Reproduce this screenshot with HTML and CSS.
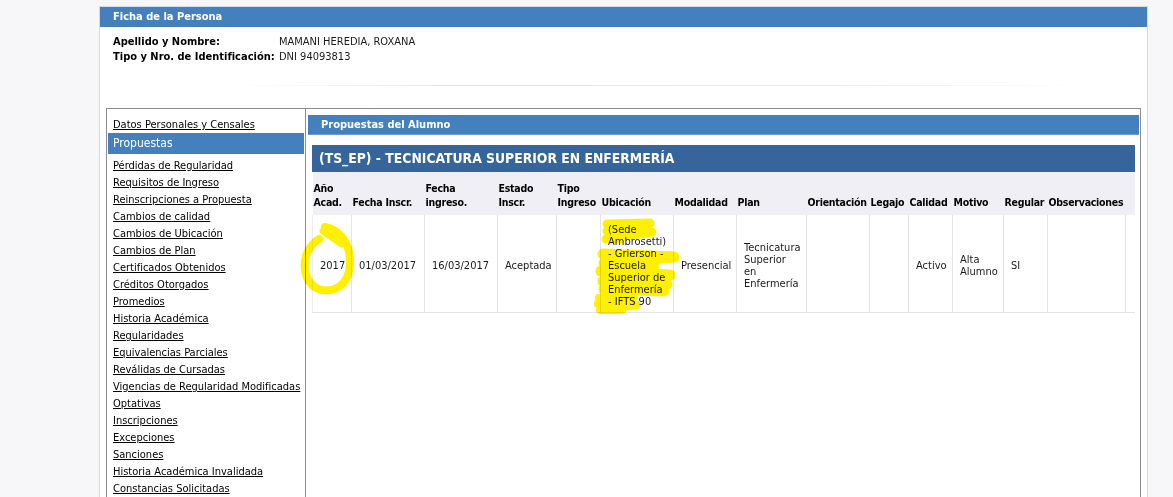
FILE: index.html
```html
<!DOCTYPE html>
<html lang="es">
<head>
<meta charset="utf-8">
<title>Ficha de la Persona</title>
<link rel="stylesheet" href="styles.css">
</head>
<body>
<div class="page">
  <div class="ficha">
    <div class="bar">Ficha de la Persona</div>
    <table class="info">
      <tr><th>Apellido y Nombre:</th><td>MAMANI HEREDIA, ROXANA</td></tr>
      <tr><th>Tipo y Nro. de Identificación:</th><td>DNI 94093813</td></tr>
    </table>
    <div class="sep"></div>
    <div class="box">
      <nav class="side">
        <a href="#">Datos Personales y Censales</a>
        <div class="active">Propuestas</div>
        <a href="#">Pérdidas de Regularidad</a>
        <a href="#">Requisitos de Ingreso</a>
        <a href="#">Reinscripciones a Propuesta</a>
        <a href="#">Cambios de calidad</a>
        <a href="#">Cambios de Ubicación</a>
        <a href="#">Cambios de Plan</a>
        <a href="#">Certificados Obtenidos</a>
        <a href="#">Créditos Otorgados</a>
        <a href="#">Promedios</a>
        <a href="#">Historia Académica</a>
        <a href="#">Regularidades</a>
        <a href="#">Equivalencias Parciales</a>
        <a href="#">Reválidas de Cursadas</a>
        <a href="#">Vigencias de Regularidad Modificadas</a>
        <a href="#">Optativas</a>
        <a href="#">Inscripciones</a>
        <a href="#">Excepciones</a>
        <a href="#">Sanciones</a>
        <a href="#">Historia Académica Invalidada</a>
        <a href="#">Constancias Solicitadas</a>
      </nav>
      <section class="content">
        <div class="subbar">Propuestas del Alumno</div>
        <div class="inner">
          <div class="title">(TS_EP) - TECNICATURA SUPERIOR EN ENFERMERÍA</div>
          <table class="grid">
            <colgroup>
              <col class="c39"><col class="c73"><col class="c73"><col class="c59"><col class="c44"><col class="c73"><col class="c63"><col class="c70"><col class="c63"><col class="c39"><col class="c44"><col class="c51"><col class="c44"><col class="c78"><col class="c9">
            </colgroup>
            <thead>
              <tr>
                <th>Año<br>Acad.</th>
                <th>Fecha Inscr.</th>
                <th>Fecha<br>ingreso.</th>
                <th>Estado<br>Inscr.</th>
                <th>Tipo<br>Ingreso</th>
                <th>Ubicación</th>
                <th>Modalidad</th>
                <th>Plan</th>
                <th>Orientación</th>
                <th>Legajo</th>
                <th>Calidad</th>
                <th>Motivo</th>
                <th>Regular</th>
                <th>Observaciones</th>
                <th></th>
              </tr>
            </thead>
            <tbody>
              <tr>
                <td>2017</td>
                <td>01/03/2017</td>
                <td>16/03/2017</td>
                <td>Aceptada</td>
                <td></td>
                <td>(Sede Ambrosetti) - Grierson - Escuela Superior de Enfermería - IFTS 90</td>
                <td>Presencial</td>
                <td>Tecnicatura Superior en Enfermería</td>
                <td></td>
                <td></td>
                <td>Activo</td>
                <td>Alta Alumno</td>
                <td>SI</td>
                <td></td>
                <td></td>
              </tr>
            </tbody>
          </table>
        </div>
      </section>
    </div>
  </div>
  <svg class="marks" width="1173" height="497" viewBox="0 0 1173 497">
    <path d="M325 227 C340 230 351 244 350 264 C349 285 335 292 322 290 C307 287 302 270 306 256 C309 247 314 242 319 239" fill="none" stroke="#fff000" stroke-width="8" stroke-linecap="round"/>
    <path d="M323 231 L342 244" fill="none" stroke="#fff000" stroke-width="7" stroke-linecap="round"/>
    <path d="M607 224 L650 223 L607 231 L652 232 L606 239 L620 239" fill="none" stroke="#fff000" stroke-width="9" stroke-linecap="round" stroke-linejoin="round"/>
    <path d="M603 254 L674 257 L604 263 L654 266 L601 271 L670 275 L603 281 L667 284 L604 289 L664 291" fill="none" stroke="#fff000" stroke-width="11" stroke-linecap="round" stroke-linejoin="round"/>
    <path d="M599 298 L634 297 L598 304 L637 305 L600 310 L622 310" fill="none" stroke="#fff000" stroke-width="8" stroke-linecap="round" stroke-linejoin="round"/>
  </svg>
</div>
</body>
</html>
```

FILE: styles.css
```css
html, body {
  margin: 0;
  padding: 0;
  background: #f7f6f9;
}

body {
  font-family: "DejaVu Sans Condensed", "DejaVu Sans", sans-serif;
  font-size: 11px;
  color: #111;
}

.page {
  position: relative;
  width: 1173px;
  height: 497px;
  overflow: hidden;
}

.ficha {
  margin: 6px 0 0 99px;
  width: 1047px;
  border: 1px solid #cfdbe8;
  border-bottom: none;
  background: #fff;
  height: 600px;
}

.bar {
  height: 20px;
  line-height: 20px;
  padding-left: 13px;
  background: #4580be;
  color: #fff;
  font-weight: bold;
  font-size: 11px;
}

.info {
  border-collapse: collapse;
  margin: 7px 0 0 13px;
}

.info th,
.info td {
  padding: 0;
  line-height: 15px;
  text-align: left;
  vertical-align: top;
  white-space: nowrap;
}

.info th {
  width: 166px;
  font-weight: bold;
  color: #000;
}

.info td {
  color: #1a1a1a;
}

.sep {
  height: 1px;
  margin: 21px 60px 22px 135px;
  background: linear-gradient(to right, rgba(230,230,230,0), #e6e6e6 25%, #eaeaea 70%, rgba(240,240,240,0));
}

.box {
  display: flex;
  margin: 0 6px;
  border: 1px solid #8c8c8c;
  height: 500px;
}

.side {
  width: 198px;
  flex: none;
  border-right: 1px solid #8c8c8c;
  padding-top: 7px;
}

.side a {
  display: block;
  padding-left: 6px;
  line-height: 17px;
  color: #000;
  text-decoration: underline;
  white-space: nowrap;
}

.side .active {
  margin: 0 1px 3px;
  height: 21px;
  line-height: 21px;
  padding-left: 5px;
  background: #4580be;
  color: #fff;
  font-size: 12px;
}

.content {
  flex: 1;
  padding: 6px 1px 0 2px;
  min-width: 0;
}

.subbar {
  height: 19px;
  line-height: 19px;
  padding-left: 13px;
  background: #4580be;
  border-bottom: 1px solid #6f9cd0;
  color: #fff;
  font-weight: bold;
  font-size: 11px;
}

.inner {
  padding: 10px 4px 0;
}

.title {
  height: 27px;
  line-height: 27px;
  padding-left: 7px;
  background: #35659b;
  color: #fff;
  font-weight: bold;
  font-size: 13.8px;
  white-space: nowrap;
}

.grid {
  width: 822px;
  table-layout: fixed;
  border-collapse: collapse;
}

.c39 { width: 39px; }
.c73 { width: 73px; }
.c59 { width: 59px; }
.c44 { width: 44px; }
.c63 { width: 63px; }
.c70 { width: 70px; }
.c51 { width: 51px; }
.c78 { width: 78px; }
.c9 { width: 9px; }

.grid th {
  background: #f0eff5;
  height: 43px;
  box-sizing: border-box;
  padding: 9px 0 6px 1px;
  line-height: 14px;
  text-align: left;
  vertical-align: bottom;
  font-weight: bold;
  font-size: 10.5px;
  letter-spacing: -0.25px;
  color: #000;
  white-space: nowrap;
}

.grid td {
  height: 97px;
  box-sizing: border-box;
  padding: 9px 6px 3px 7px;
  line-height: 12px;
  vertical-align: middle;
  border-left: 1px solid #e4e4e4;
  border-bottom: 1px solid #e4e4e4;
  color: #1a1a1a;
}

.grid td:first-child {
  border-left: 1px solid #eeeeee;
}

.marks {
  position: absolute;
  left: 0;
  top: 0;
  pointer-events: none;
  mix-blend-mode: multiply;
}
```
